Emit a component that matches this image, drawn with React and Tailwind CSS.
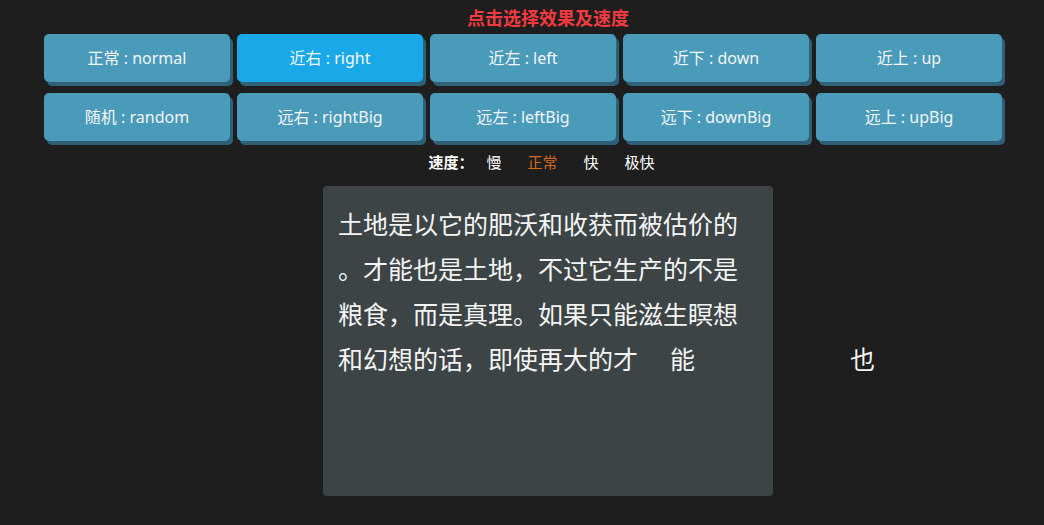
import { useState } from "react";

const effects = [
  ["正常", "normal"],
  ["近右", "right"],
  ["近左", "left"],
  ["近下", "down"],
  ["近上", "up"],
  ["随机", "random"],
  ["远右", "rightBig"],
  ["远左", "leftBig"],
  ["远下", "downBig"],
  ["远上", "upBig"],
];

const speeds = ["慢", "正常", "快", "极快"];

const text =
  "土地是以它的肥沃和收获而被估价的。才能也是土地，不过它生产的不是粮食，而是真理。如果只能滋生瞑想和幻想的话，即使再大的才";

export default function App() {
  const [effect, setEffect] = useState("right");
  const [speed, setSpeed] = useState("正常");

  return (
    <div
      className="min-h-screen w-full bg-[#1e1e1e] text-white"
      style={{ fontFamily: '"Noto Sans", "Noto Sans CJK SC", sans-serif' }}
    >
      <div className="pl-[52px] pt-[6px] text-center text-[18px] font-bold leading-[24px] text-[#f03b40]">
        点击选择效果及速度
      </div>

      <div className="ml-[44px] mt-[4px] flex w-[970px] flex-wrap">
        {effects.map(([zh, en]) => (
          <button
            key={en}
            onClick={() => setEffect(en)}
            className={
              "mb-[11px] mr-[7px] flex h-[48px] w-[186px] items-center justify-center rounded-[5px] text-[16px] text-[#f2f6f8] shadow-[3px_4px_0_#2f6078] " +
              (effect === en ? "bg-[#1aa9e8]" : "bg-[#4a9aba]")
            }
          >
            {zh} : {en}
          </button>
        ))}
      </div>

      <div className="mt-[-2px] flex items-center justify-center pl-[52px] text-[15px] leading-[24px]">
        <span className="font-bold">速度：</span>
        {speeds.map((s) => (
          <span
            key={s}
            onClick={() => setSpeed(s)}
            className={"cursor-pointer px-[13px] " + (speed === s ? "text-[#d2691e]" : "text-white")}
          >
            {s}
          </span>
        ))}
      </div>

      <div className="flex justify-center pl-[52px] pt-[12px]">
        <div className="h-[310px] w-[450px] rounded-[4px] bg-[#3c4446] px-[15px] py-[16px] text-[25px] leading-[45px] text-[#f4f4f4]">
          {text.split("").map((c, i) => (
            <span key={i} className="inline-block w-[25px]">
              {c}
            </span>
          ))}
          <span className="inline-block w-[25px] translate-x-[32px]">能</span>
          <span className="inline-block w-[25px] translate-x-[187px]">也</span>
        </div>
      </div>
    </div>
  );
}
